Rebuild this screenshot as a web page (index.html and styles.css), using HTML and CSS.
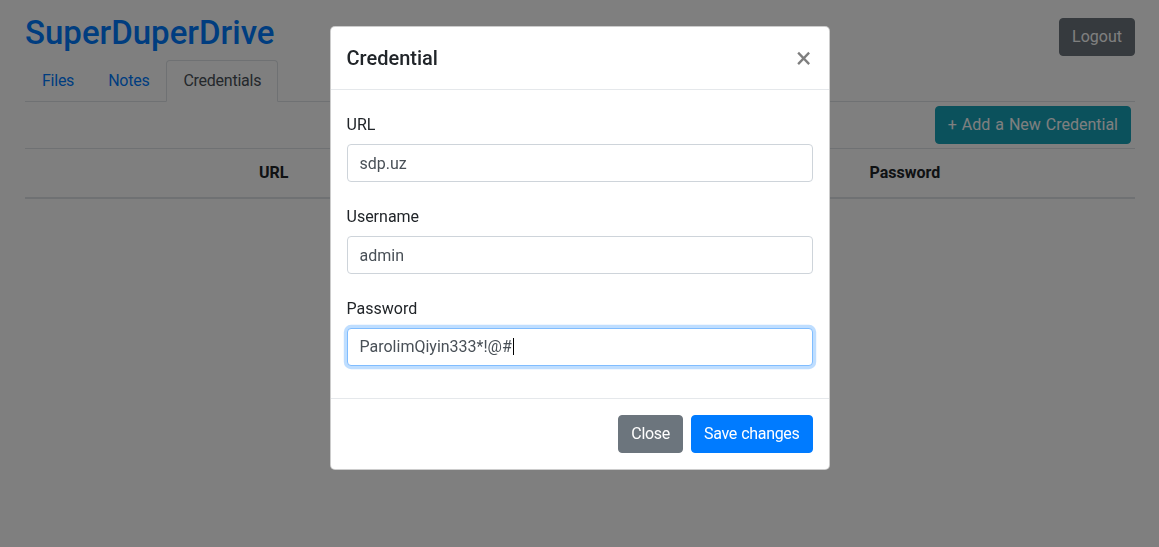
FILE: index.html
```html
<!DOCTYPE html>
<html lang="en">
<head>
<meta charset="utf-8">
<title>SuperDuperDrive - Credentials</title>
<link rel="stylesheet" href="styles.css">
</head>
<body>
<div class="page">
  <header class="topbar">
    <h1 class="brand">SuperDuperDrive</h1>
    <button type="button" class="btn btn-secondary btn-logout">Logout</button>
  </header>
  <nav class="tabs">
    <a class="tab" href="#files">Files</a>
    <a class="tab" href="#notes">Notes</a>
    <a class="tab active" href="#credentials">Credentials</a>
  </nav>
  <section class="tab-pane">
    <div class="toolbar">
      <button type="button" class="btn btn-info btn-add">+ Add a New Credential</button>
    </div>
    <table class="table">
      <colgroup>
        <col class="col-actions">
        <col class="col-url">
        <col class="col-user">
        <col class="col-pass">
      </colgroup>
      <thead>
        <tr><th></th><th>URL</th><th>Username</th><th>Password</th></tr>
      </thead>
      <tbody></tbody>
    </table>
  </section>
</div>

<div class="backdrop"></div>

<div class="modal">
  <div class="modal-dialog">
    <div class="modal-content">
      <div class="modal-header">
        <h5 class="modal-title">Credential</h5>
        <button type="button" class="close" aria-label="Close">&times;</button>
      </div>
      <div class="modal-body">
        <div class="form-group">
          <label class="form-label">URL</label>
          <input class="form-control" type="text" value="sdp.uz">
        </div>
        <div class="form-group">
          <label class="form-label">Username</label>
          <input class="form-control" type="text" value="admin">
        </div>
        <div class="form-group">
          <label class="form-label">Password</label>
          <div class="form-control is-focused">ParolimQiyin333*!@#<span class="caret"></span></div>
        </div>
      </div>
      <div class="modal-footer">
        <button type="button" class="btn btn-secondary">Close</button>
        <button type="button" class="btn btn-primary">Save changes</button>
      </div>
    </div>
  </div>
</div>
</body>
</html>
```

FILE: styles.css
```css
* { box-sizing: border-box; }

html, body {
  margin: 0;
  height: 100%;
}

body {
  font-family: Roboto, "Noto Sans", "Liberation Sans", sans-serif;
  font-size: 16px;
  line-height: 1.5;
  color: #212529;
  background: #fff;
  overflow: hidden;
}

.page {
  padding: 14px 24px 0 25px;
}

.topbar {
  display: flex;
  justify-content: space-between;
  align-items: flex-start;
}

.brand {
  margin: 0 0 8px 0;
  font-size: 33px;
  font-weight: 500;
  line-height: 38px;
  color: #007bff;
}

.btn-logout {
  margin-top: 4px;
}

.btn {
  display: inline-block;
  font-family: inherit;
  font-size: 16px;
  font-weight: 400;
  line-height: 1.5;
  padding: 6px 12px;
  border: 1px solid transparent;
  border-radius: 4px;
  color: #fff;
  cursor: pointer;
  letter-spacing: -0.2px;
  word-spacing: 0.5px;
}

.btn-secondary { background: #6c757d; border-color: #6c757d; }
.btn-primary { background: #007bff; border-color: #007bff; }
.btn-info { background: #17a2b8; border-color: #17a2b8; }

.btn-logout { letter-spacing: 0; }

.tabs {
  display: flex;
  border-bottom: 1px solid #dee2e6;
}

.tab {
  display: block;
  padding: 8px 16px;
  margin-bottom: -1px;
  border: 1px solid transparent;
  border-radius: 4px 4px 0 0;
  color: #007bff;
  text-decoration: none;
  letter-spacing: -0.25px;
}

.tab.active {
  color: #495057;
  background: #fff;
  border-color: #dee2e6 #dee2e6 #fff;
}

.toolbar {
  display: flex;
  justify-content: flex-end;
}

.btn-add {
  margin: 4px;
  letter-spacing: 0;
  word-spacing: 1px;
}

.table {
  width: 100%;
  border-collapse: collapse;
  table-layout: fixed;
  color: #212529;
}

.col-actions { width: 20%; }
.col-url { width: 35%; }
.col-user { width: 20%; }
.col-pass { width: 25%; }

.table th {
  padding: 12px;
  text-align: left;
  vertical-align: bottom;
  font-weight: 700;
  border-top: 1px solid #dee2e6;
  border-bottom: 2px solid #dee2e6;
}

.backdrop {
  position: fixed;
  inset: 0;
  background: #000;
  opacity: 0.5;
}

.modal {
  position: fixed;
  inset: 0;
}

.modal-dialog {
  width: 500px;
  margin: 26px auto 0;
}

.modal-content {
  background: #fff;
  border: 1px solid rgba(0, 0, 0, 0.2);
  border-radius: 5px;
  overflow: hidden;
}

.modal-header {
  display: flex;
  align-items: flex-start;
  justify-content: space-between;
  padding: 16px;
  border-bottom: 1px solid #e5e8eb;
}

.modal-title {
  margin: 0;
  font-size: 20px;
  font-weight: 500;
  line-height: 1.5;
}

.close {
  padding: 17px 17px 15px 16px;
  margin: -16px -16px -16px auto;
  background: transparent;
  border: 0;
  font-family: inherit;
  font-size: 29px;
  font-weight: 400;
  line-height: 1;
  color: #000;
  opacity: 0.5;
  text-shadow: 0 1px 0 #fff;
  cursor: pointer;
}

.modal-body {
  padding: 16px;
}

.form-group {
  margin-bottom: 16px;
}

.form-label {
  display: block;
  padding: 7px 0;
  margin: 0;
  line-height: 1.5;
}

.form-control {
  display: block;
  width: 100%;
  height: 38px;
  padding: 6px 12px;
  font-family: inherit;
  font-size: 16px;
  line-height: 1.5;
  color: #495057;
  background: #fff;
  border: 1px solid #ced4da;
  border-radius: 4px;
}

.form-control.is-focused {
  border-color: #80bdff;
  box-shadow: 0 0 0 3.2px rgba(0, 123, 255, 0.25);
  white-space: nowrap;
}

.caret {
  display: inline-block;
  width: 1px;
  height: 17px;
  margin-left: 1px;
  background: #000;
  vertical-align: -3px;
}

.modal-footer {
  display: flex;
  justify-content: flex-end;
  align-items: center;
  padding: 12px;
  border-top: 1px solid #e5e8eb;
}

.modal-footer .btn {
  margin: 4px;
  letter-spacing: -0.3px;
}
```
